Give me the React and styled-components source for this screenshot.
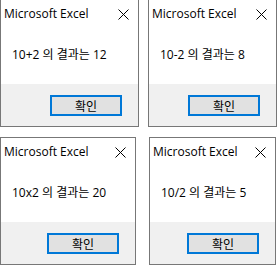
import React from "react";
import styled, { createGlobalStyle } from "styled-components";

const Global = createGlobalStyle`
  html, body { margin: 0; padding: 0; background: #ffffff; }
  body { width: 278px; height: 266px; overflow: hidden; }
`;

const Grid = styled.div`
  display: grid;
  grid-template-columns: 148px 130px;
  row-gap: 10px;
  margin-top: -1px;
  align-items: start;
`;

const Dialog = styled.div`
  box-sizing: border-box;
  width: ${(p) => p.$w}px;
  height: 128px;
  margin-left: ${(p) => p.$shift || 0}px;
  border: 1px solid #777777;
  background: #ffffff;
  display: flex;
  flex-direction: column;
  font-family: "Open Sans", "Noto Sans CJK KR", sans-serif;
  color: #000000;
`;

const TitleBar = styled.div`
  height: 28px;
  display: flex;
  align-items: center;
  justify-content: space-between;
  padding: 0 9px 0 3px;
`;

const Title = styled.span`
  font-size: 12px;
  line-height: 16px;
`;

const Body = styled.div`
  height: 56px;
  box-sizing: border-box;
  padding: 19px 0 0 11px;
  font-size: 12px;
  line-height: 16px;
  white-space: nowrap;
`;

const Footer = styled.div`
  flex: 1;
  background: #f0f0f0;
  display: flex;
  justify-content: flex-end;
  align-items: flex-start;
  padding: 11px 16px 0 0;
`;

const Button = styled.button`
  box-sizing: border-box;
  width: 72px;
  height: 21px;
  border: 2px solid #0078d7;
  background: #e1e1e1;
  font-family: "Noto Sans CJK KR", sans-serif;
  font-size: 12px;
  line-height: 15px;
  padding: 0;
  color: #000;
`;

const Close = () => (
  <svg width="11" height="11" viewBox="0 0 11 11">
    <path d="M0.5 0.5 L10.5 10.5 M10.5 0.5 L0.5 10.5" stroke="#000" strokeWidth="1" fill="none" />
  </svg>
);

const boxes = [
  { msg: "10+2 의 결과는 12", w: 139 },
  { msg: "10-2 의 결과는 8", w: 129 },
  { msg: "10x2 의 결과는 20", w: 136 },
  { msg: "10/2 의 결과는 5", w: 127, shift: 1 },
];

export default function App() {
  return (
    <>
      <Global />
      <Grid>
        {boxes.map((b) => (
          <Dialog key={b.msg} $w={b.w} $shift={b.shift}>
            <TitleBar>
              <Title>Microsoft Excel</Title>
              <Close />
            </TitleBar>
            <Body>{b.msg}</Body>
            <Footer>
              <Button>확인</Button>
            </Footer>
          </Dialog>
        ))}
      </Grid>
    </>
  );
}
